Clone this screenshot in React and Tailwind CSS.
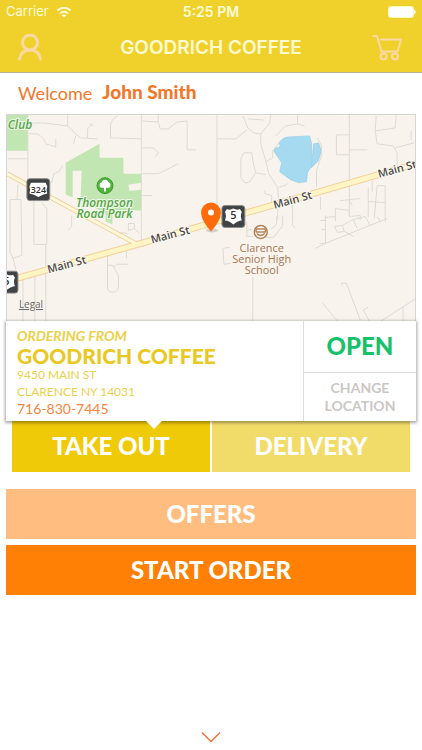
import React from 'react';
import clsx from 'clsx';

// Minor streets, drawn as thin grey lines under everything else
const STREETS = [
  'M141 114V242',
  'M27 114V185',
  'M28 122H43L67 125L75 133L80 137L97 138',
  'M28 133H37L43 138L45 143L55 146V138',
  'M67 114V125M75 135L73 143M87 137V128L92 122M89 123L93 125',
  'M117 115Q110 119 110 125V137L141 138',
  'M142 120L158 121L160 128H168L177 121L187 120V149H196M158 121V114',
  'M142 147H153L158 152L155 156',
  'M142 173H158L178 163M142 195H152',
  'M7 158H27M62 165L58 171L53 173L51 182',
  'M9 199H20L21 255L12 258L15 270M9 199V252L12 258M17 184L16 199',
  'M33 200V244H46V208L41 202',
  'M22 277V321M34 274V321M45 244V321',
  'M71 215V226L67 230',
  'M107 255V287Q107 292 112 292Q117 292 118 287V275L112 265H107M113 267L117 264H128M126 250V258',
  'M118 238V232L127 233M128 230V223H134V228L128 230M134 228L139 233',
  'M217 114V205',
  'M243 115L248 127L254 132L261 133L270 122L271 114',
  'M248 118L264 119M217 138H236L247 129',
  'M261 133V143L266 160L269 173L278 187L279 200',
  'M244 152H252L254 165L256 172L266 174M256 172L249 182H245L241 177V158L244 152',
  'M266 161L273 157V150L281 140',
  'M298 114V123L286 125L276 135M298 123L305 125',
  'M337 134H350M337 134V154H350M350 114V216M350 149H368',
  'M377 115L376 130L378 143L394 145L398 152V165',
  'M376 130L396 127L397 114M396 147L415 142M412 130V139',
  'M318 137L322 145V155L317 170V186',
  'M279 187L287 184L289 182',
  'M265 190V193L272 195V206M278 203V219M293 203V219M321 196V209',
  'M369 187V217M373 180V191M378 185H386V222M378 185L375 218M369 201L386 202',
  'M341 200L361 198M350 200L353 205',
  'M325 217L336 216V208L350 210V216L361 215V220M336 216V221',
  'M316 248L326 243L388 218M326 215V243H320M322 229H326M321 220H326',
  'M335 226L343 225L345 231L338 232L335 226M343 225L354 219L358 228M345 231L354 236M354 219L366 216M366 216L371 225M378 216L381 221',
  'M264 237H274L283 225V215M277 216V224L271 229M293 215V225L296 228M247 222V236H253M247 230L252 229',
  'M230 247L223 248L224 264L231 263',
  'M253 277V321',
  'M343 286L342 283L347 283L349 288L361 320M323 303L338 321M369 307L364 310L370 321M382 321L416 299M404 307V321',
];

const ROADS = ['M6 173L135 243', 'M6 281L80 260L141 243L244 213L417 163'];

const ROAD_LABELS = [
  { x: 67, y: 268 },
  { x: 171, y: 238 },
  { x: 294, y: 203 },
  { x: 399, y: 172 },
];

function Shield({ x, y, label }) {
  return (
    <g transform={`translate(${x} ${y})`}>
      <rect width="23" height="22" rx="3" fill="#404244" stroke="#8a8a8a" />
      {label.length > 1 ? (
        <path d="M4 4H19L20.500 8Q19 11 20.500 15Q16 16 11.500 18.500Q7 16 2.500 15Q4 11 2.500 8Z" fill="#fff" />
      ) : (
        <path d="M5 3.500Q8 5 11.500 3Q15 5 18 3.500L20 6.500Q18 10 20 15Q16 15 11.500 19Q7 15 3 15Q5 10 3 6.500Z" fill="#fff" />
      )}
      <text x="11.500" y="14" textAnchor="middle" fontSize={label.length > 1 ? 9 : 11} fontWeight="600" fill="#333">
        {label}
      </text>
    </g>
  );
}

function StoreMap() {
  return (
    <svg
      viewBox="6 114 410 207"
      preserveAspectRatio="xMidYMid slice"
      role="img"
      aria-label="Store location"
      className="block w-full font-['Open_Sans',sans-serif]"
    >
      <rect x="6" y="114" width="410" height="207" fill="#f8f4ed" />

      {/* Parks and lake */}
      <g fill="#c2e6b1">
        <path d="M6 114H27V150H6Z" />
        <path d="M65 162L99 143V157H123V173H141V182L128 184L129 190L141 189V210H112V224L105 221V213L80 200L81 170H72V197L65 194Z" />
      </g>
      <g fill="#a5daf1" stroke="#8ecbe8" strokeWidth="0.600">
        <path d="M279 142Q283 136 289 136L310 135L312 142V165L308 172L307 181L299 182L291 179L280 171L282 162L274 150L276 147Q283 147 279 142Z" />
        <path d="M314 143L319 142L322 150L319 160L312 167Z" />
      </g>

      <g fill="none" stroke="#dddad5" strokeWidth="1">
        {STREETS.map((d) => (
          <path key={d} d={d} />
        ))}
      </g>

      {/* Main roads: casing first, then fill */}
      <g fill="none" strokeLinejoin="round">
        <path d={ROADS[0]} stroke="#f2cf9d" strokeWidth="5" />
        <path d={ROADS[1]} stroke="#f2cf9d" strokeWidth="7" />
        <path d={ROADS[0]} stroke="#fff8da" strokeWidth="3" />
        <path d={ROADS[1]} stroke="#fff4c4" strokeWidth="5" />
      </g>

      <g fontSize="11" fontWeight="600" fill="#4a4a4a" textAnchor="middle" stroke="#fbf8ef" strokeWidth="2" paintOrder="stroke">
        {ROAD_LABELS.map(({ x, y }) => (
          <text key={x} x={x} y={y} transform={`rotate(-15 ${x} ${y})`}>
            Main St
          </text>
        ))}
      </g>

      <Shield x={26} y={178} label="324" />
      <Shield x={222} y={205} label="5" />
      <Shield x={-6} y={271} label="5" />

      <g fontSize="12" fontWeight="600" fontStyle="italic" fill="#58a449" textAnchor="middle" stroke="#f0f8e8" strokeWidth="2" paintOrder="stroke">
        <text x="19" y="128">Club</text>
        <text x="104" y="206">Thompson</text>
        <text x="104" y="218">Road Park</text>
      </g>
      <circle cx="104.500" cy="185" r="8" fill="#4fb53a" stroke="#3d962d" />
      <path d="M103.500 191V187Q99 188 99 184.500Q99 182 101 181.500Q102 179 104.500 179Q107 179 108 181.500Q110 182 110 184.500Q110 188 105.500 187V191Z" fill="#fff" />

      {/* School */}
      <circle cx="261" cy="231.500" r="6.500" fill="#fff" stroke="#b08258" strokeWidth="1.500" />
      <path d="M257 228.500H265Q266.500 230 265.500 231.500H256.500Q255.500 230 257 228.500ZM257 233Q261 237 265 233" fill="none" stroke="#b08258" strokeWidth="1.500" />
      <g fontSize="11" fill="#a37654" textAnchor="middle" stroke="#f8f4ed" strokeWidth="2" paintOrder="stroke">
        <text x="262" y="252">Clarence</text>
        <text x="262" y="263">Senior High</text>
        <text x="262" y="274">School</text>
      </g>

      <ellipse cx="212" cy="230" rx="6" ry="2" fill="#000" opacity="0.150" />
      <path d="M211 231Q201 220 201 212A10 10 0 0 1 221 212Q221 220 211 231Z" fill="#ff6b0a" />
      <circle cx="211" cy="212" r="3" fill="#fff" />

      <text x="18" y="308" fontSize="10" fill="#666" textDecoration="underline">
        Legal
      </text>
    </svg>
  );
}

function StatusBar() {
  return (
    <div className="grid h-6 grid-cols-3 items-center px-[6px] text-[13px] text-[#fffad8]">
      <div className="flex items-center gap-2">
        <span>Carrier</span>
        <svg viewBox="0 0 14 11" className="h-[11px] w-[14px]" fill="none" stroke="currentColor" strokeWidth="2">
          <path d="M0.500 3.500Q7 -2 13.500 3.500M3 6.500Q7 3 11 6.500" />
          <path d="M7 10.500L4.500 8.500Q7 6.500 9.500 8.500Z" fill="currentColor" stroke="none" />
        </svg>
      </div>
      <span className="text-center text-sm font-semibold">5:25 PM</span>
      <svg viewBox="0 0 28 12" className="h-3 w-7 justify-self-end">
        <rect x="0.500" y="0.500" width="25" height="11" rx="2" fill="none" stroke="#fff9c0" />
        <rect x="1" y="1" width="24" height="10" rx="1.500" fill="#fff" />
        <path d="M26.500 4Q28 6 26.500 8Z" fill="#fff" stroke="#fff" />
      </svg>
    </div>
  );
}

function Header() {
  return (
    <header className="border-b border-[#b5b191] bg-[#f0d12b] font-[Inter,sans-serif]">
      <StatusBar />
      <div className="flex h-12 items-center justify-between px-[18px]">
        <button type="button" aria-label="Account" className="text-[#fad9a6]">
          <svg viewBox="0 0 32 28" className="h-7 w-8" fill="none" stroke="currentColor" strokeWidth="3" strokeLinecap="round">
            <circle cx="12" cy="8.500" r="7.500" />
            <path d="M1.500 25Q3 16 12 16Q21 16 22.500 25" />
          </svg>
        </button>
        <h1 className="text-[19px] font-semibold text-[#fffad0]">GOODRICH COFFEE</h1>
        <button type="button" aria-label="Cart" className="text-[#fad9a6]">
          <svg viewBox="0 0 32 28" className="h-7 w-8" fill="none" stroke="currentColor" strokeWidth="2" strokeLinecap="round" strokeLinejoin="round">
            <path d="M1.500 2H5L9.500 17.500H25.500L29 5.500H9" />
            <circle cx="11.500" cy="22.500" r="3" />
            <circle cx="23" cy="22.500" r="3" />
          </svg>
        </button>
      </div>
    </header>
  );
}

function StoreCard() {
  return (
    <section className="relative flex h-[100px] bg-white shadow-[0_1px_3px_1px_rgba(0,0,0,0.35)]">
      <div className="flex-1 pl-[11px] pt-[5px] text-[#ecd04a]">
        <p className="text-sm font-bold italic leading-5">ORDERING FROM</p>
        <h2 className="text-[21px] font-black leading-5 text-[#eac824]">GOODRICH COFFEE</h2>
        <p className="text-xs leading-[17px]">
          9450 MAIN ST
          <br />
          CLARENCE NY 14031
        </p>
        <a href="tel:7168307445" className="block text-sm leading-[17px] text-[#f5843c]">
          716-830-7445
        </a>
      </div>
      <div className="flex w-[113px] flex-col border-l border-[#dedede]">
        <div className="flex h-[52px] items-center justify-center border-b border-[#dedede] text-2xl font-black text-[#15c26b]">
          OPEN
        </div>
        <button type="button" className="flex-1 text-sm font-bold leading-[18px] text-[#cbc7c5]">
          CHANGE
          <br />
          LOCATION
        </button>
      </div>
      {/* Pointer down to the order type tabs */}
      <span className="absolute left-[140px] top-full border-x-8 border-t-8 border-x-transparent border-t-white" />
    </section>
  );
}

function ActionButton({ className, children }) {
  return (
    <button type="button" className={clsx('w-full text-2xl font-black text-white', className)}>
      {children}
    </button>
  );
}

export default function App() {
  return (
    <div className="flex min-h-screen flex-col bg-white font-[Lato,sans-serif]">
      <Header />
      <main className="flex flex-1 flex-col px-[6px]">
        <p className="flex h-[41px] items-center gap-[10px] px-3 pb-[2px] text-[#f3772a]">
          <span className="text-lg">Welcome</span>
          <span className="text-[19px] font-black">John Smith</span>
        </p>
        <div className="border border-b-0 border-[#d5d5d5]">
          <StoreMap />
        </div>
        <StoreCard />
        <div className="grid grid-cols-2 gap-[2px] px-[6px]">
          <ActionButton className="h-[51px] bg-[#efca08]">TAKE OUT</ActionButton>
          <ActionButton className="h-[51px] bg-[#f2dc69]">DELIVERY</ActionButton>
        </div>
        <div className="mt-[17px] flex flex-col gap-[6px]">
          <ActionButton className="h-[50px] bg-[#ffbe80]">OFFERS</ActionButton>
          <ActionButton className="h-[50px] bg-[#ff8005]">START ORDER</ActionButton>
        </div>
        <button type="button" aria-label="Show more" className="mx-auto mb-2 mt-auto text-[#f2773d]">
          <svg viewBox="0 0 20 10" className="h-[10px] w-5" fill="none" stroke="currentColor" strokeWidth="1.500">
            <path d="M1 0.500L10 9.500L19 0.500" />
          </svg>
        </button>
      </main>
    </div>
  );
}
